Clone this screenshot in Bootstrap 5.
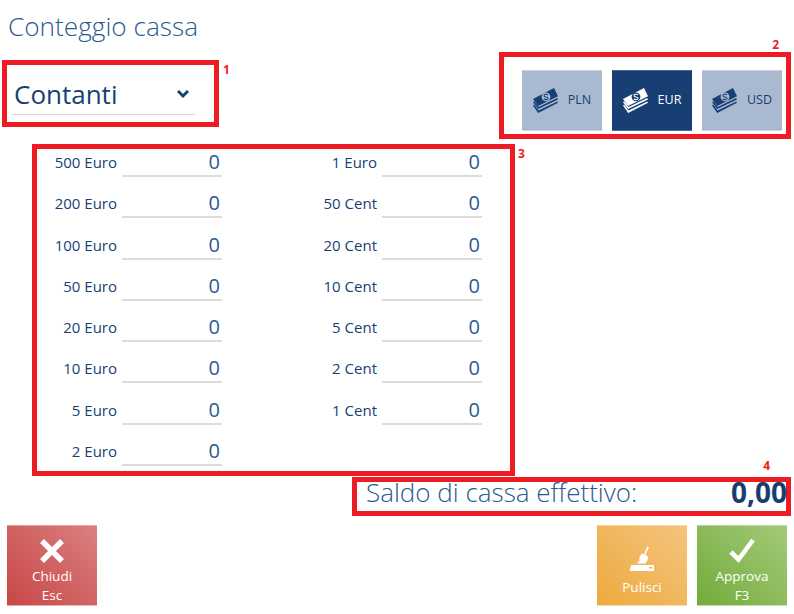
<!DOCTYPE html>
<html lang="it">
<head>
<meta charset="utf-8">
<title>Conteggio cassa</title>
<link href="https://cdn.jsdelivr.net/npm/bootstrap@5.3.0/dist/css/bootstrap.min.css" rel="stylesheet">
<style>
html,body{height:614px;overflow:hidden;background:#fff}
body{font-family:"Open Sans","Noto Sans","Liberation Sans",sans-serif;color:#173f74}
.screen{width:794px;height:614px;padding:0 3px 0 2px}
.page-head{height:52px;margin:0 0 0 6px;padding-top:8px;font-size:26.2px;font-weight:300;line-height:36px;color:#2b5a92}
.frame{border:5px solid #ed1c24;position:relative}
.tag{position:absolute;color:#ed1c24;font-size:12px;font-weight:700;line-height:14px}
.top-row{height:92px}
.frame-type{width:217px;height:67px;margin-top:8px;padding:10px 0 0 5px}
.frame-type .tag{left:216px;top:-2px}
.type-pick{width:183px;height:40px;border-bottom:1px solid #d5d5d5;padding:0 6px 2px 2px;font-size:26px;line-height:36px;color:#173f74}
.frame-cur{width:292px;height:87px;padding:13px 4px 0 18px;gap:10px}
.frame-cur .tag{right:7px;top:-19px}
.cur-tile{width:80px;height:61px;border:0;border-top:1px solid #c9d3e2;border-bottom:1px solid #c9d3e2;border-radius:0;background:#a9b9cf;color:#173f74;font-size:12.5px;gap:10px;padding:0}
.cur-tile.is-on{background:#173f74;color:#fff;border-color:#46689a}
.cur-tile:hover{background:#a9b9cf;color:#173f74}
.cur-tile.is-on:hover{background:#173f74;color:#fff}
.cur-tile svg{width:25px;height:25px;flex:none}
.frame-coins{width:483px;height:332px;margin-left:30px}
.frame-coins .tag{left:481px;top:-2px}
.coin-grid{display:grid;grid-template-columns:185px 260px;grid-template-rows:repeat(8,41.3px);grid-auto-flow:column}
.coin-cell{gap:5px;height:41.3px}
.coin-name{font-size:15px;line-height:26px;color:#173f74;white-space:nowrap}
.coin-val{width:100px;height:28px;border-bottom:2px solid #dcdcdc;text-align:right;font-size:20px;line-height:26px;padding-right:2px;color:#2b5a92}
.frame-total{width:439px;height:39px;margin:1px 0 0 350px;padding:0 0 10px 9px}
.frame-total .tag{right:16px;top:-23px}
.total-label{font-size:26px;font-weight:300;color:#2b5a92;line-height:26px}
.total-num{font-size:28px;font-weight:700;color:#173f74;line-height:26px;margin-right:-1px}
.foot-row{margin:9px 4px 0 5px;height:81px;gap:10px}
.act{width:90px;height:81px;padding:6px 0 0;border:0;border-top:1px solid rgba(255,255,255,.45);border-bottom:1px solid rgba(255,255,255,.45);border-radius:0;color:#fff;font-size:13.5px;line-height:19px}
.act svg{display:block;margin:4px auto 1px;width:30px;height:30px}
.act-close,.act-close:hover{background:linear-gradient(45deg,#c94646,#d98080);color:#fff}
.act-clear,.act-clear:hover{background:linear-gradient(45deg,#eeaa3e,#f3c47e);color:#fff}
.act-ok,.act-ok:hover{background:linear-gradient(45deg,#72ab3a,#a4ca7a);color:#fff}
.act-clear span{display:block;margin-top:4px}
</style>
</head>
<body>
<svg width="0" height="0" class="position-absolute">
  <defs>
    <symbol id="cash" viewBox="0 0 25 25">
      <path fill="currentColor" d="M1.2 13.2 0 14.2 5.2 21 25 11.4l-.8-1.3L5.6 19z"/>
      <path fill="currentColor" d="M1.2 16.6 0 17.6 5.2 25 25 14.8l-.8-1.3L5.6 22.6z"/>
      <path fill="currentColor" d="M0 11 21 0l4 8.2L5 18z"/>
      <circle cx="13" cy="8.8" r="4.4" fill="var(--hole)"/>
      <path d="M15 6.9c-1-.9-4-.9-4 .8 0 1.8 4 .7 4 2.5 0 1.7-3 1.7-4 .8" fill="none" stroke="currentColor" stroke-width="1.1"/>
    </symbol>
  </defs>
</svg>
<div class="screen">
  <h1 class="page-head">Conteggio cassa</h1>

  <div class="top-row d-flex justify-content-between align-items-start">
    <div class="frame frame-type">
      <span class="tag">1</span>
      <div class="type-pick d-flex justify-content-between align-items-center">
        <span>Contanti</span>
        <svg width="12" height="10" viewBox="0 0 12 10"><path d="M1 2l5 5 5-5" fill="none" stroke="#173f74" stroke-width="3"/></svg>
      </div>
    </div>
    <div class="frame frame-cur d-flex">
      <span class="tag">2</span>
      <button class="btn cur-tile d-flex align-items-center justify-content-center" style="--hole:#a9b9cf"><svg><use href="#cash"/></svg>PLN</button>
      <button class="btn cur-tile is-on d-flex align-items-center justify-content-center" style="--hole:#173f74"><svg><use href="#cash"/></svg>EUR</button>
      <button class="btn cur-tile d-flex align-items-center justify-content-center" style="--hole:#a9b9cf"><svg><use href="#cash"/></svg>USD</button>
    </div>
  </div>

  <div class="frame frame-coins">
    <span class="tag">3</span>
    <div class="coin-grid">
      <div class="coin-cell d-flex justify-content-end align-items-start"><span class="coin-name">500 Euro</span><div class="coin-val">0</div></div>
      <div class="coin-cell d-flex justify-content-end align-items-start"><span class="coin-name">200 Euro</span><div class="coin-val">0</div></div>
      <div class="coin-cell d-flex justify-content-end align-items-start"><span class="coin-name">100 Euro</span><div class="coin-val">0</div></div>
      <div class="coin-cell d-flex justify-content-end align-items-start"><span class="coin-name">50 Euro</span><div class="coin-val">0</div></div>
      <div class="coin-cell d-flex justify-content-end align-items-start"><span class="coin-name">20 Euro</span><div class="coin-val">0</div></div>
      <div class="coin-cell d-flex justify-content-end align-items-start"><span class="coin-name">10 Euro</span><div class="coin-val">0</div></div>
      <div class="coin-cell d-flex justify-content-end align-items-start"><span class="coin-name">5 Euro</span><div class="coin-val">0</div></div>
      <div class="coin-cell d-flex justify-content-end align-items-start"><span class="coin-name">2 Euro</span><div class="coin-val">0</div></div>
      <div class="coin-cell d-flex justify-content-end align-items-start"><span class="coin-name">1 Euro</span><div class="coin-val">0</div></div>
      <div class="coin-cell d-flex justify-content-end align-items-start"><span class="coin-name">50 Cent</span><div class="coin-val">0</div></div>
      <div class="coin-cell d-flex justify-content-end align-items-start"><span class="coin-name">20 Cent</span><div class="coin-val">0</div></div>
      <div class="coin-cell d-flex justify-content-end align-items-start"><span class="coin-name">10 Cent</span><div class="coin-val">0</div></div>
      <div class="coin-cell d-flex justify-content-end align-items-start"><span class="coin-name">5 Cent</span><div class="coin-val">0</div></div>
      <div class="coin-cell d-flex justify-content-end align-items-start"><span class="coin-name">2 Cent</span><div class="coin-val">0</div></div>
      <div class="coin-cell d-flex justify-content-end align-items-start"><span class="coin-name">1 Cent</span><div class="coin-val">0</div></div>
    </div>
  </div>

  <div class="frame frame-total d-flex justify-content-between align-items-center">
    <span class="tag">4</span>
    <span class="total-label">Saldo di cassa effettivo:</span>
    <span class="total-num">0,00</span>
  </div>

  <div class="foot-row d-flex">
    <button class="btn act act-close"><svg viewBox="0 0 30 30"><path d="M5 5l20 20M25 5L5 25" stroke="#fff" stroke-width="5.5" fill="none"/></svg>Chiudi<br>Esc</button>
    <div class="flex-grow-1"></div>
    <button class="btn act act-clear"><svg viewBox="0 0 30 30"><path fill="#fff" d="M20.2 2.5l1.8 1-3.6 7.3 2.6 1.6c.2 2.6-1 5-2.6 7H9.5c1.8-1 3.4-2.6 4-4.4l-2 .8c.8-2 1.6-4 3.2-6.4l2.4 1.1zM3 21h24v6H3l0-2.5 1.5-3.5zM22 23v1.5h3V23z" fill-rule="evenodd"/></svg><span>Pulisci</span></button>
    <button class="btn act act-ok"><svg viewBox="0 0 30 30"><path d="M4 16l7.5 7.5L26 4" stroke="#fff" stroke-width="4.6" fill="none"/></svg>Approva<br>F3</button>
  </div>
</div>
</body>
</html>
